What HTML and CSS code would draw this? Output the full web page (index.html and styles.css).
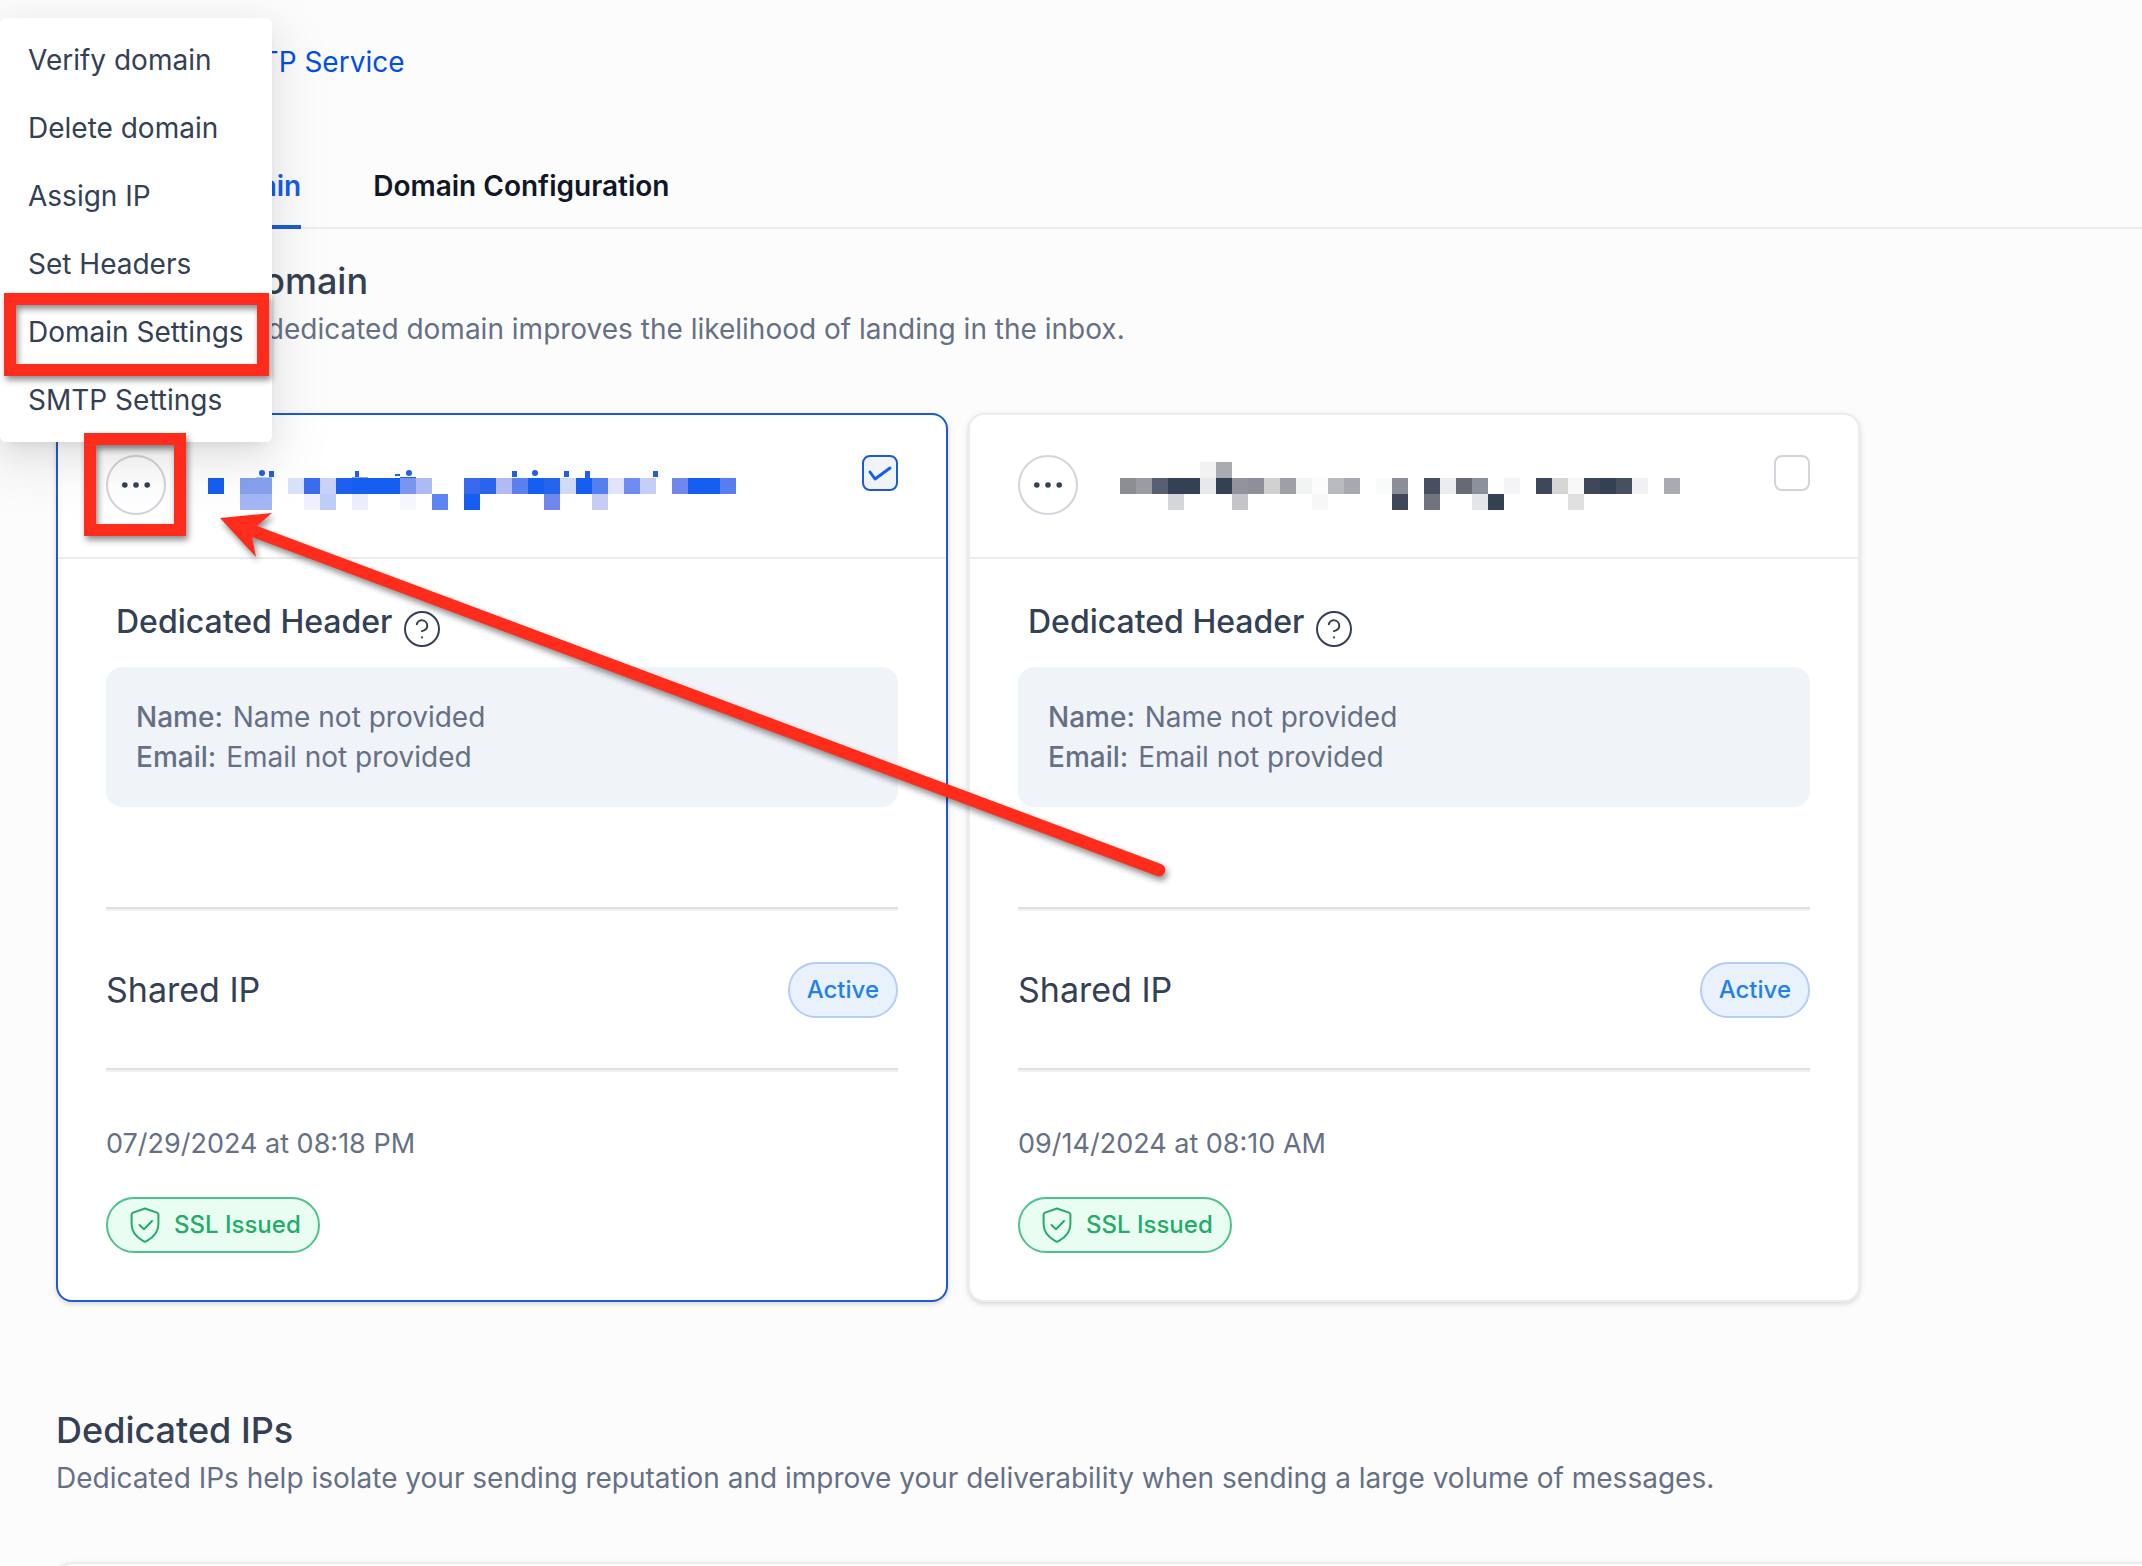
FILE: index.html
```
<!DOCTYPE html>
<html lang="en">
  <head>
    <meta charset="UTF-8" />
    <meta name="viewport" content="width=device-width, initial-scale=1.0" />
    <title>SMTP Service</title>
    <link rel="stylesheet" href="styles.css">
  </head>

  <body>
    <!-- shared icons -->
    <svg class="sprite" aria-hidden="true">
      <symbol id="icon-dots" viewBox="0 0 60 60">
        <circle cx="18" cy="30" r="3" />
        <circle cx="30" cy="30" r="3" />
        <circle cx="42" cy="30" r="3" />
      </symbol>
      <symbol id="icon-help" viewBox="0 0 36 36">
        <circle cx="18" cy="18" r="17" />
        <path d="M12.8 13.2a5.3 5.3 0 0 1 10.4 1.7c0 3.6-5.2 5.2-5.2 5.2M18 26.3v.2" />
      </symbol>
      <symbol id="icon-shield" viewBox="0 0 30 36">
        <path d="M15 1.5 27 5.6c1 .4 1.4 1 1.4 2v9.6c0 8.6-6.6 14-11.8 17-1.2.7-2 .7-3.2 0C8.2 31.2 1.6 25.8 1.6 17.2V7.6c0-1 .4-1.6 1.400-2z" />
        <path d="m9.500 18 4.500 4.300 8-8.300" />
      </symbol>
    </svg>

    <div class="page">
      <nav class="breadcrumb">
        <a href="#">Settings</a>
        <span>/</span>
        <a href="#">SMTP Service</a>
      </nav>

      <div class="tabs" role="tablist">
        <button class="tab active" type="button" role="tab" aria-selected="true">Dedicated domain</button>
        <button class="tab" type="button" role="tab" aria-selected="false">Domain Configuration</button>
      </div>

      <section class="section">
        <h2>Dedicated domain</h2>
        <p>Implementing a dedicated domain improves the likelihood of landing in the inbox.</p>

        <div class="cards">
          <article class="card selected">
            <header class="card-header">
              <button class="more" type="button" aria-label="Domain actions">
                <svg><use href="#icon-dots" /></svg>
              </button>
              <!-- hidden domain name -->
              <svg class="masked" viewBox="0 0 560 60" shape-rendering="crispEdges" aria-hidden="true">
                <g fill="#155eef">
                  <rect x="0" y="23" width="16" height="16" />
                  <rect x="144" y="23" width="48" height="16" />
                  <rect x="320" y="23" width="16" height="16" />
                  <rect x="368" y="23" width="16" height="16" />
                  <rect x="480" y="23" width="32" height="16" />
                  <rect x="256" y="39" width="16" height="16" />
                </g>
                <rect x="32" y="23" width="32" height="16" fill="#87a1ee" />
                <rect x="80" y="23" width="16" height="16" fill="#dae2f9" />
                <rect x="96" y="23" width="16" height="16" fill="#3b6cee" />
                <rect x="112" y="23" width="16" height="16" fill="#c9d1f6" />
                <rect x="128" y="23" width="16" height="16" fill="#1c60ef" />
                <rect x="192" y="23" width="16" height="16" fill="#7b94ef" />
                <rect x="208" y="23" width="16" height="16" fill="#aebaf5" />
                <rect x="256" y="23" width="16" height="16" fill="#3868ee" />
                <rect x="272" y="23" width="16" height="16" fill="#2a64ee" />
                <rect x="288" y="23" width="16" height="16" fill="#b2baf3" />
                <rect x="304" y="23" width="16" height="16" fill="#5a80f0" />
                <rect x="336" y="23" width="16" height="16" fill="#2463ee" />
                <rect x="352" y="23" width="16" height="16" fill="#d0daf7" />
                <rect x="384" y="23" width="16" height="16" fill="#557eee" />
                <rect x="400" y="23" width="16" height="16" fill="#e0e3fa" />
                <rect x="416" y="23" width="16" height="16" fill="#6f8df0" />
                <rect x="432" y="23" width="16" height="16" fill="#c3cef9" />
                <rect x="464" y="23" width="16" height="16" fill="#7088ec" />
                <rect x="512" y="23" width="16" height="16" fill="#597cef" />
                <rect x="32" y="39" width="32" height="16" fill="#a4b6f4" />
                <rect x="96" y="39" width="16" height="16" fill="#eef1fd" />
                <rect x="112" y="39" width="16" height="16" fill="#bdcdf8" />
                <rect x="144" y="39" width="16" height="16" fill="#e9edfd" />
                <rect x="192" y="39" width="16" height="16" fill="#f5f7fe" />
                <rect x="224" y="39" width="16" height="16" fill="#5c85f3" />
                <rect x="336" y="39" width="16" height="16" fill="#7088ec" />
                <rect x="384" y="39" width="16" height="16" fill="#c6ccf6" />
                <g fill="#2160e0">
                  <circle cx="54" cy="18" r="3" shape-rendering="auto" />
                  <rect x="61" y="16" width="5" height="6" />
                  <rect x="147" y="16" width="4" height="7" />
                  <rect x="187" y="19" width="5" height="2" />
                  <circle cx="201" cy="18" r="3" shape-rendering="auto" />
                  <rect x="192" y="22" width="16" height="1" />
                  <rect x="304" y="16" width="5" height="6" />
                  <circle cx="327" cy="18" r="3" shape-rendering="auto" />
                  <rect x="356" y="16" width="5" height="6" />
                  <rect x="377" y="16" width="5" height="7" />
                  <rect x="445" y="16" width="5" height="6" />
                </g>
                <rect x="48" y="22" width="16" height="1" fill="#b5cbf7" />
                <rect x="144" y="22" width="16" height="1" fill="#87a1ee" />
              </svg>
              <input class="check" type="checkbox" aria-label="Use this domain" checked />
            </header>
            <div class="card-body">
              <h3 class="card-title"><span>Dedicated Header</span><svg><use href="#icon-help" /></svg></h3>
              <div class="header-info">
                <p><b>Name:</b> Name not provided</p>
                <p><b>Email:</b> Email not provided</p>
              </div>
              <hr />
              <div class="ip-row">
                <span class="ip-name">Shared IP</span>
                <span class="badge badge-blue">Active</span>
              </div>
              <hr />
              <p class="date">07/29/2024 at 08:18 PM</p>
              <span class="badge badge-green"><svg><use href="#icon-shield" /></svg>SSL Issued</span>
            </div>
          </article>

          <article class="card">
            <header class="card-header">
              <button class="more" type="button" aria-label="Domain actions">
                <svg><use href="#icon-dots" /></svg>
              </button>
              <!-- hidden domain name -->
              <svg class="masked" viewBox="0 0 560 60" shape-rendering="crispEdges" aria-hidden="true">
                <g fill="#334155">
                  <rect x="48" y="23" width="32" height="16" />
                  <rect x="96" y="23" width="16" height="16" />
                  <rect x="480" y="23" width="16" height="16" />
                  <rect x="368" y="39" width="16" height="16" />
                </g>
                <rect x="80" y="7" width="16" height="16" fill="#f2f2f2" />
                <rect x="96" y="7" width="16" height="16" fill="#a9abaf" />
                <rect x="0" y="23" width="16" height="16" fill="#8b8d93" />
                <rect x="16" y="23" width="16" height="16" fill="#9a9ca3" />
                <rect x="32" y="23" width="16" height="16" fill="#566072" />
                <rect x="80" y="23" width="16" height="16" fill="#e7e8ea" />
                <rect x="112" y="23" width="16" height="16" fill="#92949b" />
                <rect x="128" y="23" width="16" height="16" fill="#8d8f99" />
                <rect x="144" y="23" width="16" height="16" fill="#d1d1d2" />
                <rect x="160" y="23" width="16" height="16" fill="#9ea0a7" />
                <rect x="176" y="23" width="16" height="16" fill="#f2f3f3" />
                <rect x="192" y="23" width="16" height="16" fill="#fcfcfc" />
                <rect x="208" y="23" width="16" height="16" fill="#b9babf" />
                <rect x="224" y="23" width="16" height="16" fill="#a7a9b1" />
                <rect x="256" y="23" width="16" height="16" fill="#f9fbfa" />
                <rect x="272" y="23" width="16" height="16" fill="#8b8d98" />
                <rect x="304" y="23" width="16" height="16" fill="#475060" />
                <rect x="320" y="23" width="16" height="16" fill="#ebecee" />
                <rect x="336" y="23" width="16" height="16" fill="#656a74" />
                <rect x="352" y="23" width="16" height="16" fill="#8b919c" />
                <rect x="384" y="23" width="16" height="16" fill="#f4f4f6" />
                <rect x="416" y="23" width="16" height="16" fill="#3e475c" />
                <rect x="432" y="23" width="16" height="16" fill="#d5d5d6" />
                <rect x="448" y="23" width="16" height="16" fill="#f8f8f8" />
                <rect x="464" y="23" width="16" height="16" fill="#3f475b" />
                <rect x="496" y="23" width="16" height="16" fill="#475060" />
                <rect x="512" y="23" width="16" height="16" fill="#f1f1f3" />
                <rect x="544" y="23" width="16" height="16" fill="#a9abb2" />
                <rect x="48" y="39" width="16" height="16" fill="#d5d6d9" />
                <rect x="112" y="39" width="16" height="16" fill="#c4c4c9" />
                <rect x="192" y="39" width="16" height="16" fill="#f7f7f7" />
                <rect x="272" y="39" width="16" height="16" fill="#3f475b" />
                <rect x="304" y="39" width="16" height="16" fill="#70747e" />
                <rect x="352" y="39" width="16" height="16" fill="#e4e5e8" />
                <rect x="448" y="39" width="16" height="16" fill="#e0e0e1" />
              </svg>
              <input class="check" type="checkbox" aria-label="Use this domain" />
            </header>
            <div class="card-body">
              <h3 class="card-title"><span>Dedicated Header</span><svg><use href="#icon-help" /></svg></h3>
              <div class="header-info">
                <p><b>Name:</b> Name not provided</p>
                <p><b>Email:</b> Email not provided</p>
              </div>
              <hr />
              <div class="ip-row">
                <span class="ip-name">Shared IP</span>
                <span class="badge badge-blue">Active</span>
              </div>
              <hr />
              <p class="date">09/14/2024 at 08:10 AM</p>
              <span class="badge badge-green"><svg><use href="#icon-shield" /></svg>SSL Issued</span>
            </div>
          </article>
        </div>
      </section>

      <section class="section section-ips">
        <h2>Dedicated IPs</h2>
        <p>Dedicated IPs help isolate your sending reputation and improve your deliverability when sending a large volume of messages.</p>
        <div class="panel"></div>
      </section>
    </div>

    <!-- actions menu -->
    <div class="menu" role="menu">
      <button type="button" role="menuitem">Verify domain</button>
      <button type="button" role="menuitem">Delete domain</button>
      <button type="button" role="menuitem">Assign IP</button>
      <button type="button" role="menuitem">Set Headers</button>
      <button type="button" role="menuitem">Domain Settings</button>
      <button type="button" role="menuitem">SMTP Settings</button>
    </div>

    <!-- red marks -->
    <svg class="marks" width="1200" height="900" aria-hidden="true">
      <rect x="10" y="299" width="253" height="71" />
      <rect x="90" y="439" width="90" height="91" />
      <path d="M220 518 272 513 257 526 1161 864a6 6 0 0 1-4 12L252 537 256 557z" />
    </svg>
  </body>
</html>
```
FILE: styles.css
```
*,
*::after,
*::before {
  padding: 0;
  margin: 0;
  box-sizing: border-box;
}
:root {
  --blue: #155eef;
  --text: #344054;
  --muted: #667085;
  --line: #eaecf0;
  --red: #ff2c1b;
}
body {
  position: relative;
  min-height: 100vh;
  background-color: #fcfcfc;
  color: var(--text);
  font-family: Inter, "Liberation Sans", sans-serif;
  font-size: 28px;
  line-height: 40px;
  overflow-x: hidden;
}
button {
  border: none;
  background: none;
  font: inherit;
  color: inherit;
  cursor: pointer;
}
.sprite {
  display: none;
}
.page {
  padding: 40px 0 0 56px;
}

/* breadcrumb + tabs */
.breadcrumb {
  display: flex;
  gap: 22px;
  color: #004eeb;
  line-height: 44px;
}
.breadcrumb a {
  color: inherit;
  text-decoration: none;
}
.tabs {
  display: flex;
  gap: 72px;
  margin-top: 80px;
  box-shadow: inset 0 -2px var(--line);
}
.tab {
  padding-bottom: 17px;
  border-bottom: 4px solid transparent;
  color: #101828;
  font-weight: 600;
  line-height: 44px;
}
.tab.active {
  border-color: #1d5bd6;
  color: var(--blue);
}

/* sections */
.section {
  padding-top: 24px;
}
.section h2 {
  font-size: 36px;
  font-weight: 500;
  line-height: 56px;
}
.section > p {
  color: var(--muted);
}
.section-ips {
  height: 264px;
  padding-top: 100px;
  overflow: hidden;
}
.cards {
  display: grid;
  grid-template-columns: repeat(2, minmax(0, 892px));
  gap: 20px;
  margin-top: 64px;
}
.panel {
  height: 160px;
  margin-top: 64px;
  border: 2px solid var(--line);
  border-right: none;
  border-radius: 16px 0 0 16px;
  background-color: #fff;
  box-shadow: 0 2px 6px rgba(16, 24, 40, 0.1);
}

/* card */
.card {
  border: 2px solid var(--line);
  border-radius: 16px;
  background-color: #fff;
  box-shadow: 0 2px 6px rgba(16, 24, 40, 0.1), 0 2px 4px rgba(16, 24, 40, 0.06);
}
.card.selected {
  border-color: #1d5bd6;
}
.card-header {
  display: flex;
  align-items: flex-start;
  padding: 40px 48px 42px;
  border-bottom: 2px solid var(--line);
}
.more {
  flex: none;
  width: 60px;
  height: 60px;
  border: 2px solid #d0d5dd;
  border-radius: 50%;
}
.more svg {
  display: block;
  width: 100%;
  height: 100%;
  fill: var(--text);
}
.masked {
  flex: 0 1 560px;
  min-width: 0;
  height: 60px;
  margin-left: 42px;
}
.check {
  flex: none;
  appearance: none;
  width: 36px;
  height: 36px;
  margin-left: auto;
  border: 2px solid #d0d5dd;
  border-radius: 8px;
  background-color: #fff;
}
.check:checked {
  border-color: #1d5bd6;
  background: #f0f3f8 url("data:image/svg+xml,%3Csvg xmlns='http://www.w3.org/2000/svg' viewBox='0 0 32 32' fill='none' stroke='%23155eef' stroke-width='3' stroke-linecap='round' stroke-linejoin='round'%3E%3Cpath d='m6 15 5 7 15-11'/%3E%3C/svg%3E") center / 100%;
}
.card-body {
  padding: 40px 48px 47px;
}
.card-title {
  display: flex;
  align-items: flex-start;
  gap: 12px;
  height: 48px;
  padding-left: 10px;
  font-size: 32px;
  font-weight: 500;
  line-height: 46px;
}
.card-title svg {
  align-self: flex-end;
  width: 36px;
  height: 36px;
  fill: none;
  stroke: var(--text);
  stroke-width: 2;
  stroke-linecap: round;
}
.header-info {
  margin: 20px 0 100px;
  padding: 30px;
  border-radius: 16px;
  background-color: #f0f3f8;
  color: var(--muted);
}
.header-info b {
  margin-right: 2px;
  font-weight: 500;
}
hr {
  height: 4px;
  border: none;
  border-top: 2px solid #dfdfdf;
  background-color: #f1f1f1;
}
.ip-row {
  display: flex;
  align-items: center;
  justify-content: space-between;
  padding: 51px 0 50px;
}
.ip-name {
  font-size: 34px;
}
.date {
  margin: 52px 0 33px;
  color: var(--muted);
  font-size: 27px;
}
.badge {
  display: inline-flex;
  align-items: center;
  height: 56px;
  padding: 0 17px;
  border: 2px solid;
  border-radius: 28px;
  font-size: 24px;
  font-weight: 500;
}
.badge-blue {
  border-color: #b2cdf7;
  background-color: #e9f1fe;
  color: #2281e8;
}
.badge-green {
  display: flex;
  gap: 14px;
  width: fit-content;
  padding-left: 22px;
  border-color: #4cc38a;
  background-color: #eafdf3;
  color: #22ac68;
}
.badge-green svg {
  width: 30px;
  height: 36px;
  fill: none;
  stroke: currentColor;
  stroke-width: 2;
  stroke-linecap: round;
  stroke-linejoin: round;
}

/* menu */
.menu {
  position: absolute;
  top: 18px;
  left: 0;
  display: flex;
  flex-direction: column;
  padding: 8px 0;
  border-radius: 6px;
  background-color: #fff;
  box-shadow: 0 6px 12px -8px rgba(0, 0, 0, 0.12),
    0 12px 32px rgba(0, 0, 0, 0.08), 0 18px 56px 16px rgba(0, 0, 0, 0.05);
}
.menu button {
  padding: 14px 28px;
  text-align: left;
}

/* red marks */
.marks {
  position: absolute;
  top: 0;
  left: 0;
  fill: var(--red);
  filter: drop-shadow(2px 4px 3px rgba(0, 0, 0, 0.45));
  pointer-events: none;
}
.marks rect {
  fill: none;
  stroke: var(--red);
  stroke-width: 12;
}
```
